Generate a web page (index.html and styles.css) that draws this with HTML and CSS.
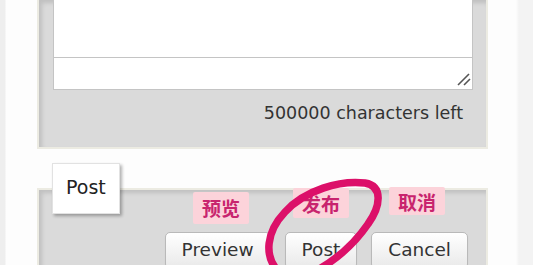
FILE: index.html
```html
<!DOCTYPE html>
<html lang="en">
<head>
    <meta charset="UTF-8">
    <meta name="viewport" content="width=device-width, initial-scale=1.0">
    <title>Reply</title>
    <link rel="stylesheet" href="styles.css">
</head>
<body>
<div class="page">

    <!-- Message box -->
    <div class="panel panel-top">
        <div class="editor"></div>
        <div class="input-row">
            <svg class="grip" width="14" height="13" viewBox="0 0 14 13">
                <line x1="1" y1="12" x2="12" y2="1" stroke="#555" stroke-width="1.6"/>
                <line x1="7" y1="12" x2="13" y2="6" stroke="#555" stroke-width="1.6"/>
            </svg>
        </div>
        <p class="counter">500000 characters left</p>
    </div>

    <!-- Post actions -->
    <div class="post-section">
        <div class="tab">Post</div>
        <div class="panel panel-bottom">
            <div class="actions">
                <button class="btn">Preview</button>
                <button class="btn">Post</button>
                <button class="btn">Cancel</button>
            </div>
        </div>
    </div>

    <!-- Annotations drawn over the screenshot -->
    <span class="note note-preview">预览</span>
    <span class="note note-post">发布</span>
    <span class="note note-cancel">取消</span>
    <svg class="circle-mark" width="140" height="100" viewBox="0 0 140 100">
        <path d="M 28 101 C 14 86, 16 62, 35 42 C 55 20, 90 10, 115 13 C 133 16, 131 36, 118 54 C 105 73, 88 89, 64 102"
              fill="none" stroke="#dc1069" stroke-width="7.5" stroke-linecap="round"/>
    </svg>

</div>
</body>
</html>
```

FILE: styles.css
```css
/* Global Styles */
body {
    margin: 0;
    font-family: "DejaVu Sans", Verdana, sans-serif;
    color: #333;
    background: linear-gradient(to right, #eeeeee 0, #eeeeee 5px, #fdfdfd 6px, #fdfdfd 516px, #f3f3f3 519px);
    height: 265px;
    overflow: hidden;
}

.page {
    position: relative;
}

.panel {
    margin-left: 37px;
    width: 451px;
    box-sizing: border-box;
    background-color: #dadada;
    border: 2px solid #ecebe2;
    box-shadow: inset 3px 3px 4px rgba(0, 0, 0, 0.12);
}

.panel-top {
    border-top: none;
    padding: 0 13px 24px 14px;
}

.editor {
    height: 57px;
    background: #fff;
    border: 1px solid #c4c4c4;
    border-top: none;
}

.input-row {
    height: 28px;
    background: #fff;
    border: 1px solid #c4c4c4;
    border-top: none;
    display: flex;
    align-items: flex-end;
    justify-content: flex-end;
    padding: 0 1px 3px 0;
}

.counter {
    margin: 13px 0 0;
    padding-right: 10px;
    text-align: right;
    font-size: 17.5px;
    line-height: 20px;
    color: #333;
}

.post-section {
    margin-top: 14px;
}

.tab {
    width: fit-content;
    margin-left: 52px;
    position: relative;
    z-index: 1;
    background: #fff;
    border: 1px solid #e2e2e2;
    padding: 13px 13px 15px;
    font-size: 19px;
    line-height: 21px;
    color: #222;
    box-shadow: 2px 2px 3px rgba(0, 0, 0, 0.3);
}

.panel-bottom {
    margin-top: -26px;
    border-bottom: none;
    padding: 42px 18px 20px;
}

.actions {
    display: flex;
    justify-content: flex-end;
    gap: 14px;
}

.btn {
    font-family: "DejaVu Sans", Verdana, sans-serif;
    font-size: 18.5px;
    line-height: 21px;
    color: #333;
    padding: 6px 16px 8px;
    border: 1px solid #b9b9b9;
    border-radius: 5px;
    background: linear-gradient(#ffffff, #e9e9e9);
    box-shadow: 0 1px 1px rgba(0, 0, 0, 0.08);
}

/* annotation labels */
.note {
    position: absolute;
    font-family: "Noto Sans CJK SC", sans-serif;
    font-weight: bold;
    font-size: 19px;
    line-height: 22px;
    color: #c8246e;
    background: #fcd3da;
    padding: 5px 9px;
    border-radius: 2px;
}

.note-preview {
    left: 193px;
    top: 192px;
}

.note-post {
    left: 293px;
    top: 188px;
    padding-bottom: 3px;
}

.note-cancel {
    left: 389px;
    top: 187px;
    padding-top: 4px;
    padding-bottom: 2px;
}

.circle-mark {
    position: absolute;
    left: 250px;
    top: 170px;
    z-index: 2;
}
```
